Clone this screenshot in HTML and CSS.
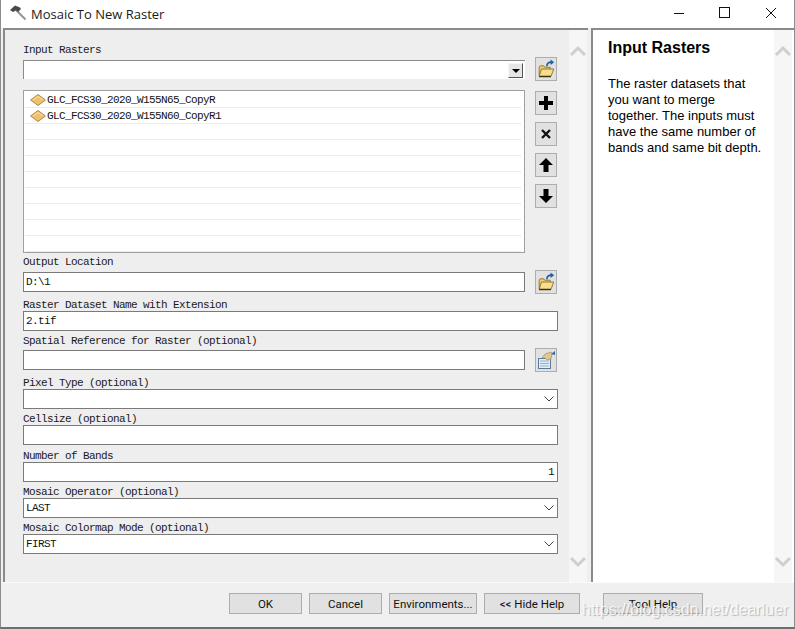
FILE: index.html
```html
<!DOCTYPE html>
<html lang="en">
  <head>
    <meta charset="UTF-8">
    <title>Mosaic To New Raster</title>
    <link rel="stylesheet" href="styles.css">
  </head>
  <body>
    <svg class="defs" width="0" height="0">
      <symbol id="folder" viewBox="0 0 22 24">
        <path d="M12 9c0-3 2-4.500 5-4.500" fill="none" stroke="#1f5fa8" stroke-width="1.800"/>
        <path d="M16 1.500l4 3-4 3z" fill="#1f5fa8"/>
        <path d="M3.500 19.500V10l1-1.500h4l1 1.500h6v2" fill="#f0cf72" stroke="#8a7028"/>
        <path d="M3.500 20l2.500-8h13.500l-3 8z" fill="#f7de8e" stroke="#8a7028"/>
        <path d="M3.500 20.300h13" stroke="#3a3008" stroke-width="1.500"/>
      </symbol>
      <symbol id="layer" viewBox="0 0 16 12">
        <path d="M8 .5L15.500 6 8 11.500.5 6z" fill="#eebf6c" stroke="#b08a4c"/>
        <path d="M3 6l5-3.500L13 6" fill="none" stroke="#f9e2ac"/>
      </symbol>
      <symbol id="chev" viewBox="0 0 18 12">
        <path d="M2 10l7-7 7 7" fill="none" stroke="#cfcfcf" stroke-width="3"/>
      </symbol>
      <symbol id="small-chev" viewBox="0 0 10 6">
        <path d="M.5 .5L5 5 9.500 .5" fill="none" stroke="#444" stroke-width="1"/>
      </symbol>
    </svg>

    <div class="window">
      <header class="titlebar">
        <svg class="hammer" width="18" height="18" viewBox="0 0 18 18">
          <path d="M6.500 5.500l9 9" stroke="#9a9488" stroke-width="2"/>
          <path d="M0 5L5 .5l5 2 1 1.500-3 3-2-1.500-3 1.500z" fill="#4a4a4a"/>
        </svg>
        <span class="title">Mosaic To New Raster</span>
        <div class="controls">
          <svg width="12" height="12" viewBox="0 0 12 12"><path d="M1 6.500h10" stroke="#111"/></svg>
          <svg width="12" height="12" viewBox="0 0 12 12"><rect x=".5" y=".5" width="10" height="10" fill="none" stroke="#111"/></svg>
          <svg width="12" height="12" viewBox="0 0 12 12"><path d="M1 1l10 10M11 1L1 11" stroke="#111"/></svg>
        </div>
      </header>

      <div class="panes">
        <section class="pane pane-form">
          <div class="form">
            <div class="row">
              <div class="grow">
                <label class="lbl lbl-first">Input Rasters</label>
                <div class="combo"><span class="combo-btn"></span></div>
              </div>
              <button class="tool tool-first"><svg width="22" height="24"><use href="#folder"/></svg></button>
            </div>

            <div class="row row-list">
              <div class="list">
                <div class="list-row"><svg width="16" height="12"><use href="#layer"/></svg>GLC_FCS30_2020_W155N65_CopyR</div>
                <div class="list-row"><svg width="16" height="12"><use href="#layer"/></svg>GLC_FCS30_2020_W155N60_CopyR1</div>
                <div class="list-row"></div>
                <div class="list-row"></div>
                <div class="list-row"></div>
                <div class="list-row"></div>
                <div class="list-row"></div>
                <div class="list-row"></div>
                <div class="list-row"></div>
                <div class="list-row"></div>
              </div>
              <div class="tools">
                <button class="tool"><svg width="16" height="16" viewBox="0 0 16 16"><path d="M8 1v14M1 8h14" stroke="#000" stroke-width="4"/></svg></button>
                <button class="tool"><svg width="12" height="12" viewBox="0 0 12 12"><path d="M2 2l8 8M10 2l-8 8" stroke="#111" stroke-width="2.400"/></svg></button>
                <button class="tool"><svg width="16" height="16" viewBox="0 0 16 16"><path d="M8 1l7 7h-4.500v7h-5V8H1z" fill="#000"/></svg></button>
                <button class="tool"><svg width="16" height="16" viewBox="0 0 16 16"><path d="M8 15l7-7h-4.500V1h-5v7H1z" fill="#000"/></svg></button>
              </div>
            </div>

            <div class="row row-output">
              <div class="grow">
                <label class="lbl lbl-roomy">Output Location</label>
                <div class="input">D:\1</div>
              </div>
              <button class="tool tool-field"><svg width="22" height="24"><use href="#folder"/></svg></button>
            </div>

            <div class="field field-a">
              <label class="lbl">Raster Dataset Name with Extension</label>
              <div class="input">2.tif</div>
            </div>

            <div class="row row-spatial">
              <div class="grow">
                <label class="lbl lbl-roomy">Spatial Reference for Raster (optional)</label>
                <div class="input"></div>
              </div>
              <button class="tool tool-field">
                <svg width="20" height="20" viewBox="0 0 20 20">
                  <rect x="2.500" y="8.500" width="12" height="10" fill="#e4eef8" stroke="#5a7a98"/>
                  <path d="M4 11h9M4 13.500h9M4 16h9" stroke="#8fb0cc"/>
                  <path d="M6 8l3-4 6-2 1 2-1 5-4 1-2-2z" fill="#e3c594" stroke="#a08458" stroke-width=".6"/>
                  <path d="M15 4l4-3v4z" fill="#2b6cb0"/>
                </svg>
              </button>
            </div>

            <div class="field field-a">
              <label class="lbl">Pixel Type (optional)</label>
              <div class="input select"><svg class="arrow" width="10" height="6"><use href="#small-chev"/></svg></div>
            </div>
            <div class="field field-b">
              <label class="lbl">Cellsize (optional)</label>
              <div class="input"></div>
            </div>
            <div class="field field-c">
              <label class="lbl">Number of Bands</label>
              <div class="input input-num">1</div>
            </div>
            <div class="field field-b">
              <label class="lbl">Mosaic Operator (optional)</label>
              <div class="input select">LAST<svg class="arrow" width="10" height="6"><use href="#small-chev"/></svg></div>
            </div>
            <div class="field field-b">
              <label class="lbl">Mosaic Colormap Mode (optional)</label>
              <div class="input select">FIRST<svg class="arrow" width="10" height="6"><use href="#small-chev"/></svg></div>
            </div>
          </div>
          <div class="scrollbar">
            <svg width="18" height="12"><use href="#chev"/></svg>
            <svg class="flip" width="18" height="12"><use href="#chev"/></svg>
          </div>
        </section>

        <section class="pane pane-help">
          <div class="help">
            <h2>Input Rasters</h2>
            <p>The raster datasets that you want to merge together. The inputs must have the same number of bands and same bit depth.</p>
          </div>
          <div class="scrollbar">
            <svg width="18" height="12"><use href="#chev"/></svg>
            <svg class="flip" width="18" height="12"><use href="#chev"/></svg>
          </div>
        </section>
      </div>

      <footer class="footer">
        <button class="btn btn-ok">OK</button>
        <button class="btn btn-ok">Cancel</button>
        <button class="btn btn-env">Environments...</button>
        <button class="btn btn-hide">&lt;&lt; Hide Help</button>
        <button class="btn btn-help">Tool Help</button>
      </footer>
      <div class="watermark">https://blog.csdn.net/dearluer</div>
    </div>
  </body>
</html>
```

FILE: styles.css
```css
* {
  margin: 0;
  padding: 0;
  box-sizing: border-box;
}
html, body {
  width: 795px;
  height: 629px;
  overflow: hidden;
  background: #fff;
}
.defs {
  position: absolute;
}
.window {
  position: relative;
  width: 795px;
  height: 629px;
  display: flex;
  flex-direction: column;
  background: #f0f0f0;
  border-left: 1px solid #8c8c8c;
  border-right: 1px solid #8c8c8c;
  border-bottom: 2px solid #6e6e6e;
}
.titlebar {
  height: 28px;
  flex: none;
  display: flex;
  align-items: center;
  background: #fff;
  padding-left: 9px;
}
.hammer {
  margin-right: 3px;
}
.title {
  font: 13px "Open Sans", "Liberation Sans", sans-serif;
  color: #1a1a1a;
}
.controls {
  margin-left: auto;
  display: flex;
  gap: 34px;
  padding-right: 17px;
  margin-top: -3px;
}
.controls svg {
  display: block;
}
.panes {
  height: 555px;
  flex: none;
  display: flex;
  padding-left: 2px;
  gap: 3px;
  border-bottom: 1px solid #fafafa;
}
.pane {
  display: flex;
  border-top: 2px solid #8a8a8a;
  border-left: 2px solid #8a8a8a;
}
.pane-form {
  width: 585px;
  background: #eeeeee;
}
.pane-help {
  width: 203px;
  background: #fff;
}
.form {
  width: 564px;
  padding: 13px 0 0 18px;
  flex: none;
}
.scrollbar {
  width: 18px;
  flex: none;
  display: flex;
  flex-direction: column;
  justify-content: space-between;
  background: #f6f6f6;
  padding: 15px 0 14px;
}
.scrollbar svg {
  display: block;
}
.flip {
  transform: scaleY(-1);
}
.row {
  display: flex;
  gap: 10px;
  width: 535px;
}
.grow {
  width: 502px;
  flex: none;
}
.lbl {
  display: block;
  height: 14px;
  font: 11px/14px "Liberation Mono", monospace;
  letter-spacing: -0.6px;
  color: #1a1a1a;
  white-space: nowrap;
}
.lbl-first {
  height: 12px;
}
.lbl-roomy {
  margin-top: 1px;
  margin-bottom: 2px;
}
.row-output .lbl-roomy {
  margin-top: 0;
  margin-bottom: 3px;
}
.combo {
  height: 19px;
  background: #fff;
  border-top: 1px solid #8a8a8a;
  border-left: 1px solid #8a8a8a;
  margin-top: 5px;
  position: relative;
}
.combo-btn {
  position: absolute;
  right: 2px;
  top: 2px;
  width: 15px;
  height: 15px;
  background: #e6e6e6;
  border-top: 1px solid #f6f6f6;
  border-left: 1px solid #f6f6f6;
  border-right: 1px solid #555;
  border-bottom: 1px solid #555;
}
.combo-btn::after {
  content: "";
  position: absolute;
  left: 3px;
  top: 5px;
  border-left: 4px solid transparent;
  border-right: 4px solid transparent;
  border-top: 4px solid #000;
}
.row-list {
  margin-top: 9px;
}
.list {
  width: 502px;
  height: 163px;
  flex: none;
  background: #fff;
  border: 1px solid #a0a0a0;
  padding-top: 1px;
}
.list-row {
  height: 16px;
  margin: 0 3px 0 1px;
  border-bottom: 1px solid #ececec;
  display: flex;
  align-items: center;
  gap: 1px;
  padding: 1px 0 0 5px;
  font: 11px/15px "Liberation Mono", monospace;
  letter-spacing: -0.6px;
  color: #111;
}
.tools {
  display: flex;
  flex-direction: column;
  gap: 7px;
  margin-top: 1px;
}
.tool {
  width: 22px;
  height: 24px;
  flex: none;
  display: flex;
  align-items: center;
  justify-content: center;
  background: #e1e1e1;
  border: 1px solid #adadad;
}
.tool-first {
  margin-top: 14px;
}
.tool-field {
  margin-top: 15px;
}
.row-output {
  margin-top: 2px;
}
.input {
  height: 20px;
  background: #fff;
  border: 1px solid #7a7a7a;
  font: 11px/17px "Liberation Mono", monospace;
  letter-spacing: -0.6px;
  color: #111;
  padding-left: 2px;
  display: flex;
  align-items: center;
}
.input-num {
  justify-content: flex-end;
  padding-right: 3px;
}
.select {
  justify-content: space-between;
  padding-right: 3px;
}
.arrow {
  margin-left: auto;
  display: block;
}
.field {
  width: 535px;
}
.field .lbl {
  height: 13px;
}
.field-a {
  margin-top: 4px;
}
.field-b {
  margin-top: 3px;
}
.field-c {
  margin-top: 4px;
}
.row-spatial {
  margin-top: 2px;
}
.help {
  width: 181px;
  flex: none;
  padding: 8px 6px 0 15px;
  font-family: "Liberation Sans", Arial, sans-serif;
  color: #000;
}
.help h2 {
  font-size: 16px;
  line-height: 20px;
  font-weight: bold;
}
.help p {
  font-size: 13px;
  line-height: 16px;
  margin-top: 18px;
}
.footer {
  flex: 1;
  display: flex;
  align-items: flex-start;
  padding: 10px 0 0 228px;
  gap: 7px;
}
.btn {
  height: 21px;
  background: #e1e1e1;
  border: 1px solid #adadad;
  font: 11.5px Roboto, "Liberation Sans", sans-serif;
  color: #111;
  white-space: nowrap;
}
.btn-ok {
  width: 73px;
}
.btn-env {
  width: 88px;
}
.btn-hide {
  width: 96px;
}
.btn-help {
  width: 100px;
  margin-left: 16px;
}
.watermark {
  position: absolute;
  left: 581px;
  top: 601px;
  font: 16px "Liberation Sans", Arial, sans-serif;
  color: rgba(255, 255, 255, 0.8);
  text-shadow: 1px 1px 1px rgba(0, 0, 0, 0.25);
  white-space: nowrap;
}
```
